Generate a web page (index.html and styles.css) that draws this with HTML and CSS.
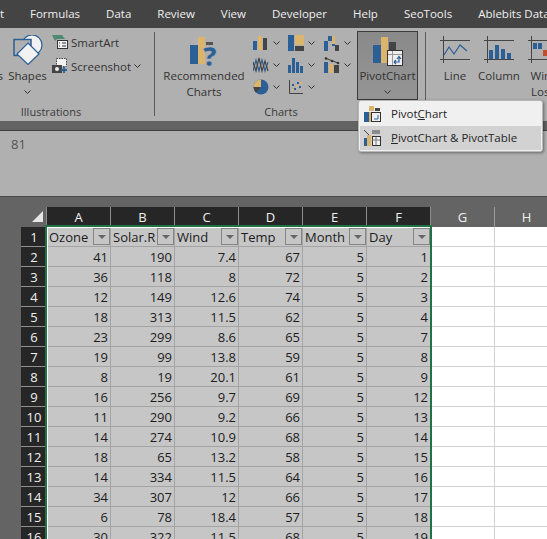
FILE: index.html
```html
<!DOCTYPE html>
<html lang="en">
<head>
<meta charset="UTF-8">
<link rel="stylesheet" href="styles.css">
<title>Excel PivotChart</title>
</head>
<body>
<div class="tabs">
    <span class="tab tab-insert">Insert</span>
    <span class="tab">Formulas</span>
    <span class="tab">Data</span>
    <span class="tab">Review</span>
    <span class="tab">View</span>
    <span class="tab">Developer</span>
    <span class="tab">Help</span>
    <span class="tab">SeoTools</span>
    <span class="tab">Ablebits Data</span>
</div>

<div class="ribbon">
    <div class="group group-illus">
        <div class="group-body">
            <div class="icons-btn">Icons</div>
            <div class="big-btn shapes-btn">
                <svg width="30" height="30" viewBox="0 0 30 30">
                    <circle cx="19" cy="10" r="10" fill="#f2f2f2" stroke="#2c5f95" stroke-width="1.2"/>
                    <rect x="1" y="4.5" width="17" height="16" fill="#b0b0b0" stroke="#2c5f95" stroke-width="1.5"/>
                    <path d="M15 8 L26 19 L15 29.5 L4 19 Z" fill="#f2f2f2" stroke="#2c5f95" stroke-width="1.2"/>
                </svg>
                <span>Shapes</span>
                <svg class="chev" width="7" height="4" viewBox="0 0 7 4"><path d="M0.5 0.5 L3.5 3.5 L6.5 0.5" fill="none" stroke="#333"/></svg>
            </div>
            <div class="small-col">
                <div class="small-btn">
                    <svg width="16" height="16" viewBox="0 0 16 16">
                        <path d="M0 1 H10 L13 5 H5 L3 7 Z" fill="#4f8a74"/>
                        <rect x="5.5" y="6.5" width="10" height="8" fill="#f2f2f2" stroke="#333"/>
                        <path d="M7 9 H8 M7 12 H8 M10 9 H14 M10 12 H14" stroke="#333"/>
                    </svg>
                    <span>SmartArt</span>
                </div>
                <div class="small-btn">
                    <svg width="16" height="16" viewBox="0 0 16 16">
                        <rect x="4.5" y="0.5" width="10" height="8" fill="#f2f2f2" stroke="#444" stroke-dasharray="1.5 1"/>
                        <rect x="0" y="7" width="10" height="8" fill="#444"/>
                        <circle cx="5" cy="11" r="2" fill="#eee"/>
                        <path d="M12 9 V15 M9 12 H15" stroke="#2c5f95" stroke-width="1.8"/>
                    </svg>
                    <span>Screenshot</span>
                    <svg width="7" height="4" viewBox="0 0 7 4"><path d="M0.5 0.5 L3.5 3.5 L6.5 0.5" fill="none" stroke="#333"/></svg>
                </div>
            </div>
        </div>
        <div class="group-label">Illustrations</div>
    </div>

    <div class="sep"></div>

    <div class="group group-charts">
        <div class="group-body">
            <div class="big-btn rec-btn">
                <svg width="29" height="30" viewBox="0 0 29 30">
                    <rect x="0" y="8" width="8" height="19" fill="#2c5f95"/>
                    <rect x="8" y="0" width="7" height="27" fill="#dcb56d"/>
                    <rect x="16" y="5" width="7" height="3" fill="#555"/>
                    <text x="13" y="29" class="qmark">?</text>
                </svg>
                <span>Recommended</span>
                <span>Charts</span>
            </div>
            <div class="chart-grid">
                <div class="mini">
                    <svg width="16" height="16" viewBox="0 0 16 16"><rect x="0" y="6" width="4" height="9" fill="#2c5f95"/><rect x="5" y="1" width="4" height="14" fill="#dcb56d"/><rect x="10" y="3" width="4" height="12" fill="#444"/></svg>
                    <svg width="7" height="4" viewBox="0 0 7 4"><path d="M0.5 0.5 L3.5 3.5 L6.5 0.5" fill="none" stroke="#333"/></svg>
                </div>
                <div class="mini">
                    <svg width="16" height="16" viewBox="0 0 16 16"><rect x="0" y="0" width="6" height="16" fill="#2c5f95"/><rect x="7" y="0" width="9" height="10" fill="#dcb56d"/><rect x="7" y="11" width="9" height="5" fill="#444"/></svg>
                    <svg width="7" height="4" viewBox="0 0 7 4"><path d="M0.5 0.5 L3.5 3.5 L6.5 0.5" fill="none" stroke="#333"/></svg>
                </div>
                <div class="mini">
                    <svg width="16" height="16" viewBox="0 0 16 16"><rect x="0" y="6" width="4" height="10" fill="#2c5f95"/><rect x="4" y="1" width="4" height="5" fill="#2c5f95"/><rect x="8" y="1" width="3" height="8" fill="#dcb56d"/><rect x="8" y="9" width="3" height="2" fill="#2c5f95"/><rect x="11" y="10" width="4" height="6" fill="#444"/></svg>
                    <svg width="7" height="4" viewBox="0 0 7 4"><path d="M0.5 0.5 L3.5 3.5 L6.5 0.5" fill="none" stroke="#333"/></svg>
                </div>
                <div class="mini">
                    <svg width="16" height="16" viewBox="0 0 16 16"><path d="M0 14 L3 3 L6 14 L9 3 L12 14 L15 5" fill="none" stroke="#2c5f95" stroke-width="1.2"/><path d="M0 5 L3 14 L6 1 L9 14 L12 4 L15 14" fill="none" stroke="#444" stroke-width="1.2"/></svg>
                    <svg width="7" height="4" viewBox="0 0 7 4"><path d="M0.5 0.5 L3.5 3.5 L6.5 0.5" fill="none" stroke="#333"/></svg>
                </div>
                <div class="mini">
                    <svg width="16" height="16" viewBox="0 0 16 16"><rect x="0" y="8" width="3" height="8" fill="#2c5f95"/><rect x="4" y="1" width="3" height="15" fill="#2c5f95"/><rect x="8" y="5" width="3" height="11" fill="#2c5f95"/><rect x="12" y="9" width="3" height="7" fill="#2c5f95"/></svg>
                    <svg width="7" height="4" viewBox="0 0 7 4"><path d="M0.5 0.5 L3.5 3.5 L6.5 0.5" fill="none" stroke="#333"/></svg>
                </div>
                <div class="mini">
                    <svg width="16" height="16" viewBox="0 0 16 16"><rect x="0" y="5" width="4" height="11" fill="#2c5f95"/><rect x="5" y="7" width="4" height="9" fill="#dcb56d"/><rect x="10" y="8" width="5" height="8" fill="#444"/><path d="M1 1 L14 6" stroke="#333"/><circle cx="2" cy="1.5" r="1.3" fill="#333"/><circle cx="8" cy="4" r="1.3" fill="#333"/><circle cx="14" cy="6" r="1.3" fill="#333"/></svg>
                    <svg width="7" height="4" viewBox="0 0 7 4"><path d="M0.5 0.5 L3.5 3.5 L6.5 0.5" fill="none" stroke="#333"/></svg>
                </div>
                <div class="mini">
                    <svg width="16" height="16" viewBox="0 0 16 16"><circle cx="8" cy="8" r="7.5" fill="#2c5f95"/><path d="M8 8 V0.5 A7.5 7.5 0 0 0 0.5 8 Z" fill="#dcb56d"/><path d="M8 8 H0.5 A7.5 7.5 0 0 0 3 13.5 Z" fill="#444"/></svg>
                    <svg width="7" height="4" viewBox="0 0 7 4"><path d="M0.5 0.5 L3.5 3.5 L6.5 0.5" fill="none" stroke="#333"/></svg>
                </div>
                <div class="mini">
                    <svg width="16" height="16" viewBox="0 0 16 16"><path d="M1.5 1 V14.5 H15" fill="none" stroke="#444"/><path d="M4 6 h2 M9 4 h2 M6 10 h2 M11 8 h2" stroke="#2c5f95" stroke-width="2"/><path d="M4 11 h2 M8 7 h2 M12 4 h2" stroke="#dcb56d" stroke-width="2"/></svg>
                    <svg width="7" height="4" viewBox="0 0 7 4"><path d="M0.5 0.5 L3.5 3.5 L6.5 0.5" fill="none" stroke="#333"/></svg>
                </div>
            </div>
            <div class="big-btn pivot-btn">
                <svg width="30" height="29" viewBox="0 0 30 29">
                    <rect x="0" y="8" width="8" height="18" fill="#2c5f95"/>
                    <rect x="8" y="0" width="7" height="26" fill="#dcb56d"/>
                    <rect x="16" y="5" width="7" height="8" fill="#444"/>
                    <rect x="14.5" y="13.5" width="15" height="15" fill="#eee" stroke="#333"/>
                    <path d="M15 17.5 H29 M19.5 14 V28" stroke="#999"/>
                    <path d="M21 25 H26 V20 M24 22 L26 19.5 L28 22 M21 25 L23 23 M21 25 L23 27" fill="none" stroke="#2c5f95" stroke-width="1.2"/>
                </svg>
                <span>PivotChart</span>
                <svg class="chev" width="7" height="4" viewBox="0 0 7 4"><path d="M0.5 0.5 L3.5 3.5 L6.5 0.5" fill="none" stroke="#333"/></svg>
            </div>
        </div>
        <div class="group-label group-label-charts">Charts</div>
    </div>

    <div class="sep"></div>

    <div class="group group-spark">
        <div class="group-body">
            <div class="big-btn spark-btn">
                <svg width="30" height="27" viewBox="0 0 30 27"><path d="M3.5 0 V27 M0 4.5 H30 M0 23.5 H30" stroke="#444"/><path d="M4 19 L9 11 L14 18 L20 9 L27 15" fill="none" stroke="#2c5f95" stroke-width="1.2"/></svg>
                <span>Line</span>
            </div>
            <div class="big-btn spark-btn">
                <svg width="30" height="27" viewBox="0 0 30 27"><path d="M3.5 0 V27 M0 4.5 H30 M0 23.5 H30" stroke="#444"/><rect x="5" y="14" width="4" height="9" fill="#2c5f95"/><rect x="11" y="9" width="4" height="14" fill="#2c5f95"/><rect x="17" y="13" width="4" height="10" fill="#2c5f95"/><rect x="23" y="17" width="4" height="6" fill="#2c5f95"/></svg>
                <span>Column</span>
            </div>
            <div class="big-btn spark-btn">
                <svg width="30" height="27" viewBox="0 0 30 27"><path d="M3.5 0 V27 M0 4.5 H30 M0 23.5 H30" stroke="#444"/><rect x="5" y="7" width="4" height="6" fill="#2c5f95"/><rect x="10" y="7" width="4" height="6" fill="#2c5f95"/><rect x="15" y="14" width="4" height="6" fill="#c0502d"/></svg>
                <span>Win/</span>
                <span>Loss</span>
            </div>
        </div>
    </div>
</div>

<div class="strip"></div>

<div class="formula">81</div>

<div class="sheet-area">
    <div class="sheet" id="sheet"></div>
</div>

<div class="menu">
    <div class="menu-item">
        <svg width="18" height="16" viewBox="0 0 18 16">
            <rect x="0" y="6" width="5" height="10" fill="#2c5f95"/>
            <rect x="5" y="0" width="5" height="5" fill="#dcb56d"/>
            <rect x="5" y="6" width="5" height="10" fill="#dcb56d"/>
            <rect x="11" y="2" width="5" height="3" fill="#444"/>
            <rect x="7.5" y="6.5" width="9" height="9" fill="#eee" stroke="#333"/>
            <path d="M10 13 H14 V9" fill="none" stroke="#2c5f95"/>
        </svg>
        <span>Pivot<u>C</u>hart</span>
    </div>
    <div class="menu-item active">
        <svg width="18" height="16" viewBox="0 0 18 16">
            <path d="M0 0 L5 5" stroke="#444"/>
            <rect x="0" y="8" width="3" height="8" fill="#2c5f95"/>
            <rect x="3" y="5" width="4" height="11" fill="#dcb56d"/>
            <rect x="8.5" y="6.5" width="8" height="9" fill="#eee" stroke="#333"/>
            <path d="M8 1 H16 M8 3 H16" stroke="#444"/>
            <path d="M8 10 H16 M12 7 V15" stroke="#777"/>
        </svg>
        <span><u>P</u>ivotChart &amp; PivotTable</span>
    </div>
</div>

<script src="sheet.js"></script>
</body>
</html>
```

FILE: styles.css
```css
html, body {
    margin: 0;
    width: 547px;
    height: 539px;
    overflow: hidden;
    font-family: "Open Sans", "Liberation Sans", sans-serif;
    position: relative;
    background: #646464;
}

/* top tabs */
.tabs {
    height: 28px;
    box-sizing: border-box;
    padding-bottom: 2px;
    background: #444444;
    color: #f0f0f0;
    font-size: 11.5px;
    display: flex;
    align-items: center;
    gap: 26px;
    white-space: nowrap;
    overflow: hidden;
}
.tab-insert {
    margin-left: -27px;
}

/* ribbon */
.ribbon {
    height: 93px;
    background: #b0b0b0;
    display: flex;
    color: #333;
    font-size: 11.5px;
    overflow: hidden;
}
.group {
    display: flex;
    flex-direction: column;
    flex: none;
}
.group-body {
    display: flex;
    height: 77px;
}
.group-label {
    text-align: center;
    font-size: 11px;
    line-height: 14px;
    color: #3a3a3a;
}
.group-label-charts {
    padding-right: 18px;
}
.sep {
    width: 1px;
    height: 84px;
    margin-top: 4px;
    background: #5a5a5a;
    flex: none;
}
.group-illus {
    width: 206px;
    margin-left: -52px;
}
.group-charts { width: 270px; }
.group-spark { flex: 1; }

.icons-btn {
    width: 55px;
    flex: none;
    text-align: right;
    padding-top: 40px;
    line-height: 16px;
}

.big-btn {
    display: flex;
    flex-direction: column;
    align-items: center;
    flex: none;
    line-height: 16px;
    box-sizing: border-box;
}
.shapes-btn {
    width: 49px;
    padding-top: 7px;
}
.shapes-btn svg:first-child { margin-bottom: 3px; }
.chev { margin-top: 6px; }

.small-col {
    display: flex;
    flex-direction: column;
    gap: 8px;
    padding-top: 6px;
}
.small-btn {
    display: flex;
    align-items: center;
    gap: 3px;
    height: 16px;
}

.rec-btn {
    width: 98px;
    padding-top: 9px;
}
.rec-btn svg { margin-bottom: 1px; }
.qmark {
    font-family: "Open Sans", sans-serif;
    font-size: 27px;
    font-weight: 800;
    fill: #2c5f95;
    stroke: #b0b0b0;
    stroke-width: 0.6px;
}

.chart-grid {
    width: 104px;
    display: grid;
    grid-template-columns: 35px 36px 33px;
    grid-auto-rows: 22px;
    padding-top: 4px;
    flex: none;
}
.mini {
    display: flex;
    align-items: center;
    gap: 4px;
}

.pivot-btn {
    width: 61px;
    height: 69px;
    margin-top: 3px;
    padding-top: 5px;
    background: linear-gradient(#8a8a8a, #959595);
    border: 1px solid #3c3c3c;
}
.pivot-btn svg:first-child { margin-bottom: 2px; }

.spark-btn {
    padding-top: 8px;
    width: 44px;
}
.spark-btn:first-child { margin-left: 7px; }
.spark-btn svg { margin-bottom: 5px; }

.strip {
    height: 9px;
    background: #636363;
}

/* formula bar */
.formula {
    background: #b0b0b0;
    border-top: 1px solid #3f3f3f;
    border-bottom: 1px solid #4a4a4a;
    box-sizing: border-box;
    height: 67px;
    padding: 4px 0 0 11px;
    font-size: 13px;
    line-height: 18px;
    color: #555;
}

/* sheet */
.sheet-area {
    padding: 10px 0 0 21px;
    height: 342px;
    box-sizing: border-box;
    overflow: hidden;
}
.sheet {
    display: grid;
    grid-template-columns: 26px repeat(8, 64px);
    grid-auto-rows: 20px;
    position: relative;
}
.cell {
    box-sizing: border-box;
    background: #c6c6c6;
    border-right: 1px solid #a4a4a4;
    border-bottom: 1px solid #a4a4a4;
    color: #1c1c1c;
    text-align: right;
    padding-right: 2px;
    line-height: 20px;
    font-size: 13px;
    overflow: hidden;
    white-space: nowrap;
}
.cell.empty {
    background: #fff;
    border-color: #d0d0d0;
}
.cell.head {
    text-align: left;
    padding: 0 0 0 2px;
    position: relative;
}
.filter {
    position: absolute;
    right: 0;
    top: 1px;
    width: 17px;
    height: 17px;
    background: #c6c6c6;
    border: 1px solid #858585;
    box-sizing: border-box;
    display: flex;
    align-items: center;
    justify-content: center;
}
.filter::after {
    content: "";
    border-left: 4px solid transparent;
    border-right: 4px solid transparent;
    border-top: 4px solid #666;
}
.corner {
    background: #646464;
    border-right: 1px solid #8a8a8a;
    position: relative;
}
.corner::after {
    content: "";
    position: absolute;
    right: 3px;
    bottom: 5px;
    border-left: 11px solid transparent;
    border-bottom: 11px solid #e6e6e6;
}
.col-h, .row-h {
    box-sizing: border-box;
    color: #f0f0f0;
    text-align: center;
    font-size: 13px;
    line-height: 20px;
    background: #262626;
    border-right: 1px solid #8f8f8f;
}
.col-h.off {
    background: #646464;
    border-right-color: #999;
}
.row-h {
    border-right: none;
    border-bottom: 1px solid #8f8f8f;
}

/* selected range over the cells */
.selection {
    position: absolute;
    left: 24px;
    top: 18px;
    width: 387px;
    height: 330px;
    box-sizing: border-box;
    border: 2px solid #217346;
    box-shadow: inset 1px 1px 0 #fff;
}

/* dropdown */
.menu {
    position: absolute;
    left: 358px;
    top: 100px;
    width: 185px;
    height: 52px;
    box-sizing: border-box;
    padding: 1px;
    background: #f0f0f0;
    border: 1px solid #b8b8b8;
    border-radius: 3px;
    box-shadow: 1px 1px 3px rgba(0, 0, 0, 0.4);
    font-size: 11.5px;
    color: #262626;
}
.menu-item {
    display: flex;
    align-items: center;
    height: 24px;
    box-sizing: border-box;
    padding: 0 0 1px 4px;
    gap: 9px;
}
.menu-item.active {
    background: #d2d2d2;
}
.menu-item span { white-space: nowrap; }
```

FILE: sheet.js
```js
const headers = ['Ozone', 'Solar.R', 'Wind', 'Temp', 'Month', 'Day'];
const rows = [
    [41, 190, 7.4, 67, 5, 1],
    [36, 118, 8, 72, 5, 2],
    [12, 149, 12.6, 74, 5, 3],
    [18, 313, 11.5, 62, 5, 4],
    [23, 299, 8.6, 65, 5, 7],
    [19, 99, 13.8, 59, 5, 8],
    [8, 19, 20.1, 61, 5, 9],
    [16, 256, 9.7, 69, 5, 12],
    [11, 290, 9.2, 66, 5, 13],
    [14, 274, 10.9, 68, 5, 14],
    [18, 65, 13.2, 58, 5, 15],
    [14, 334, 11.5, 64, 5, 16],
    [34, 307, 12, 66, 5, 17],
    [6, 78, 18.4, 57, 5, 18],
    [30, 322, 11.5, 68, 5, 19]
];

const sheet = document.getElementById('sheet');

function addCell(cls, text) {
    const div = document.createElement('div');
    div.className = cls;
    div.textContent = text;
    sheet.appendChild(div);
    return div;
}

addCell('corner', '');
for (const letter of 'ABCDEF') addCell('col-h', letter);
for (const letter of 'GH') addCell('col-h off', letter);

addCell('row-h', 1);
for (const name of headers) {
    const cell = addCell('cell head', name);
    const btn = document.createElement('span');
    btn.className = 'filter';
    cell.appendChild(btn);
}
addCell('cell empty', '');
addCell('cell empty', '');

rows.forEach((row, i) => {
    addCell('row-h', i + 2);
    for (const value of row) addCell('cell', value);
    addCell('cell empty', '');
    addCell('cell empty', '');
});

addCell('selection', '');
```
